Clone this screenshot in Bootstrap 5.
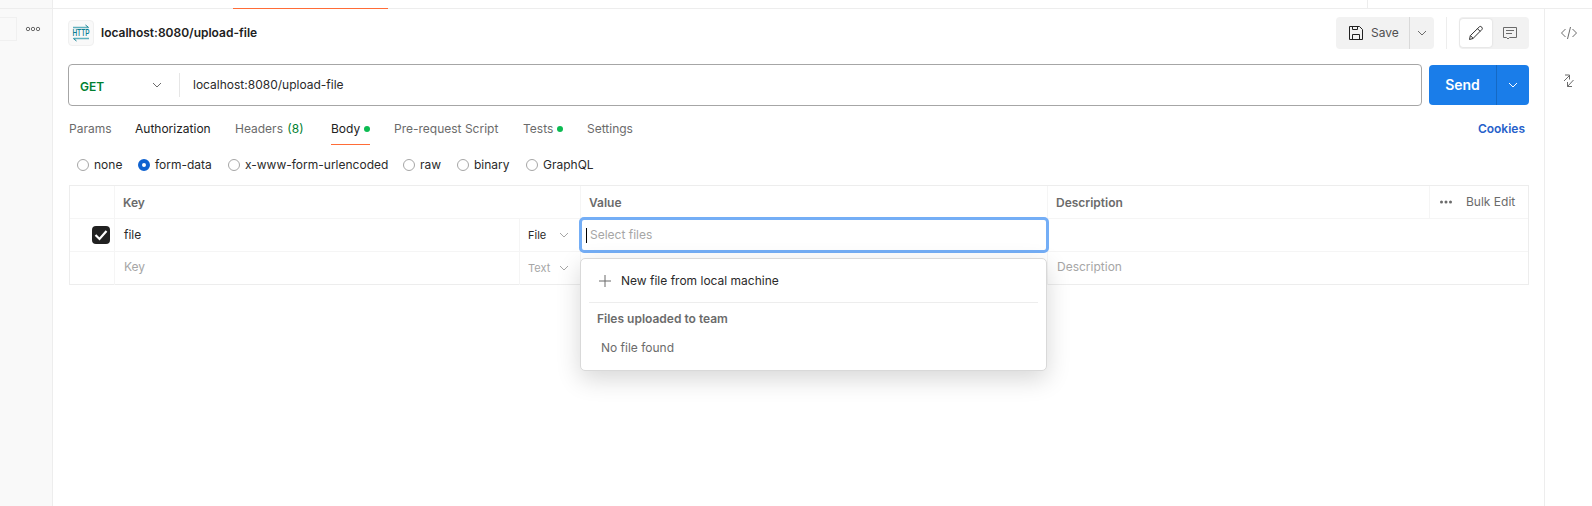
<!DOCTYPE html>
<html lang="en">
<head>
<meta charset="utf-8">
<meta name="viewport" content="width=device-width, initial-scale=1">
<title>localhost:8080/upload-file</title>
<link href="https://cdn.jsdelivr.net/npm/bootstrap@5.3.0/dist/css/bootstrap.min.css" rel="stylesheet">
<style>
body{font-family:Inter,"Liberation Sans",sans-serif;font-size:12px;line-height:18px;color:#2a2a2a;background:#fff;height:506px}
svg{display:block;fill:none;flex:none;overflow:visible}
.topline{height:9px;border-bottom:1px solid #ededed}
.topline .rail{width:53px;background:#f9f9f9;border-right:1px solid #ededed}
.tab-accent{width:155px;height:1px;background:#ff6c37;margin:8px 0 -1px 180px}
.tab-end{width:1px;background:#ededed;margin-left:979px}
.rail-left{width:53px;background:#f9f9f9;border-right:1px solid #ededed;padding-top:8px}
.stub{width:17px;height:24px;border:1px solid #f0f0f0;border-left:0;margin-right:9px}
.rail-right{width:48px;border-left:1px solid #ededed}
.workspace{padding:8px 15px 0}
.http-icon{width:26px;height:26px;background:#f9f9f9;border:1px solid #f0f0f0;border-radius:4px;margin-right:7px}
.grey-box{background:#f2f2f2;height:32px;border-radius:4px}
.save-main{width:74px;padding-left:12px;gap:7px;border-right:1px solid #d9d9d9;color:#505050}
.save-more{width:24px}
.sep{width:1px;height:32px;background:#ededed;margin:0 12px}
.on{width:32px;height:28px;background:#fff;border-radius:3px;margin-left:1px;box-shadow:0 0 2px #ccc}
.urlbox{width:1354px;height:42px;border:1px solid #a6a6a6;border-radius:4px;margin-right:7px}
.method{width:111px;height:24px;border-right:1px solid #e6e6e6;padding:0 17px 0 11px;color:#007f31}
.send{width:100px;height:40px;background:#1a7de9;border-radius:4px;color:#fff;font-size:14px}
.send-main{width:68px;border-right:1px solid #1569c4}
.tabs{height:39px;color:#6b6b6b;padding-left:1px}
.tabs>div{height:39px;padding-top:8px;white-space:nowrap;display:flex;align-items:center;border-bottom:1px solid transparent}
.tabs>div.active{border-color:#ff6c37;color:#212121}
.dot{width:6px;height:6px;border-radius:50%;background:#0cbb52;margin-left:4px;flex:none}
.radios{height:40px;padding:0 0 1px 9px}
.radios>div{display:flex;align-items:center;white-space:nowrap}
.radios i{width:12px;height:12px;border:1px solid #a6a6a6;border-radius:50%;margin-right:5px;flex:none}
.radios i.sel{border:4px solid #0f62d0}
.kv{margin-left:1px;width:1460px;height:100px;display:grid;grid-template-columns:45px 405px 61px 467px 382px 98px;grid-template-rows:repeat(3,33px);border:1px solid #ededed}
.kv>div{border-right:1px solid #f5f5f5;border-bottom:1px solid #f5f5f5;padding-left:9px;display:flex;align-items:center;position:relative}
.kv>div.hd{padding:2px 0 0 8px}
.kv .end{border-right:0}
.kv .last{border-bottom:0;padding-bottom:3px}
.hd{font-weight:600;color:#6b6b6b}
.ph{color:#a6a6a6}
.kv>div.kind{font-size:11px;padding:0 0 1px 8px}
.kind span{width:31px}
.check{width:18px;height:18px;background:#212121;border-radius:4px;margin-left:13px}
.focusbox{position:absolute;left:-2px;top:-2px;width:470px;height:36px;border:3px solid #74aef6;border-radius:5px;background:#fff;z-index:2;padding-left:4px}
.caret{width:1px;height:15px;background:#000;margin-right:3px}
.pop{position:absolute;left:-1px;top:39px;width:467px;height:113px;background:#fff;border:1px solid #d9d9d9;border-radius:5px;box-shadow:0 8px 24px rgba(0,0,0,.16);z-index:2;padding:0 8px}
</style>
</head>
<body class="d-flex flex-column overflow-hidden">
<div class="topline d-flex flex-shrink-0"><div class="rail"></div><div class="tab-accent"></div><div class="tab-end"></div></div>
<div class="d-flex flex-grow-1">
  <aside class="rail-left flex-shrink-0"><div class="d-flex">
    <div class="stub"></div>
    <svg width="14" height="24" viewBox="0 0 14 24" stroke="#6b6b6b"><circle cx="2" cy="12" r="1.700"/><circle cx="7" cy="12" r="1.700"/><circle cx="12" cy="12" r="1.700"/></svg>
  </div></aside>
  <main class="workspace flex-grow-1">
    <header class="d-flex align-items-center">
      <div class="http-icon d-flex align-items-center justify-content-center">
        <svg width="18" height="20" viewBox="0 0 18 20" stroke="#5fb0bd"><path d="M1 4.500h15.500M17 15.500H1.500" stroke-width="1.600"/><path d="M13.500 2l3 2.500M1.500 15.500l3 2.500" stroke="#0b7f91"/><text x="0.500" y="13" font-family="Roboto" font-size="8.500" textLength="17" lengthAdjust="spacingAndGlyphs" fill="#0b7f91" stroke="none" font-weight="500">HTTP</text></svg>
      </div>
      <span class="fw-semibold" style="color:#212121">localhost:8080/upload-file</span>
      <div class="grey-box d-flex ms-auto">
        <div class="save-main d-flex align-items-center">
          <svg width="16" height="16" viewBox="0 0 16 16" stroke="#212121"><path d="M1.500 1.500h10l3 3v10h-13zM4.500 1.500v3h5v-3M4.500 14.500v-5h7v5"/></svg>Save
        </div>
        <div class="save-more d-flex align-items-center justify-content-center"><svg width="10" height="6" viewBox="0 0 10 6" stroke="#6b6b6b"><path d="m1 1 4 4 4-4"/></svg></div>
      </div>
      <div class="sep"></div>
      <div class="grey-box d-flex align-items-center" style="width:70px">
        <div class="on d-flex align-items-center justify-content-center"><svg width="16" height="16" viewBox="0 0 16 16" stroke="#303030"><path d="M1.500 14.500l.8-3.800L11.500 1.700q1.300-.8 2.300.5t.2 2.200L5 13.500zM9.500 3.700l2.700 2.700M2.500 10.700l2.700 2.700"/></svg></div>
        <svg style="margin-left:10px" width="16" height="16" viewBox="0 0 16 16" stroke="#6b6b6b"><path d="M1.500 2.500h13v10h-7L6 14l-1.500-1.500h-3zM4 5.500h8M4 8.500h6"/></svg>
      </div>
    </header>
    <div class="d-flex align-items-center" style="margin-top:15px">
      <div class="urlbox d-flex align-items-center">
        <div class="method d-flex align-items-center justify-content-between"><span class="fw-semibold pt-1" style="line-height:16px">GET</span><svg width="10" height="6" viewBox="0 0 10 6" stroke="#6b6b6b"><path d="m1 1 4 4 4-4"/></svg></div>
        <span style="margin-left:13px">localhost:8080/upload-file</span>
      </div>
      <div class="send d-flex">
        <div class="send-main d-flex align-items-center justify-content-center fw-semibold">Send</div>
        <div class="flex-grow-1 d-flex align-items-center justify-content-center"><svg width="10" height="6" viewBox="0 0 10 6" stroke="#fff"><path d="m1 1 4 4 4-4"/></svg></div>
      </div>
    </div>
    <nav class="tabs d-flex">
      <div style="width:66px">Params</div>
      <div style="width:100px;color:#212121">Authorization</div>
      <div style="width:96px">Headers&nbsp;<span style="color:#007f31;margin-left:1px">(8)</span></div>
      <div class="active" style="width:39px;margin-right:24px">Body<span class="dot"></span></div>
      <div style="width:129px">Pre-request Script</div>
      <div style="width:64px">Tests<span class="dot"></span></div>
      <div>Settings</div>
      <div class="ms-auto fw-semibold" style="color:#265fca;padding-right:4px">Cookies</div>
    </nav>
    <div class="radios d-flex">
      <div style="width:61px"><i></i>none</div>
      <div style="width:90px"><i class="sel"></i>form-data</div>
      <div style="width:175px"><i></i>x-www-form-urlencoded</div>
      <div style="width:54px"><i></i>raw</div>
      <div style="width:69px"><i></i>binary</div>
      <div><i></i>GraphQL</div>
    </div>
    <div class="kv">
      <div></div><div class="hd" style="grid-column:span 2">Key</div><div class="hd">Value</div><div class="hd">Description</div>
      <div class="end" style="color:#6b6b6b"><svg width="14" height="6" viewBox="0 0 14 6"><g fill="#6b6b6b"><circle cx="2.500" cy="3" r="1.500"/><circle cx="7" cy="3" r="1.500"/><circle cx="11.500" cy="3" r="1.500"/></g></svg><span style="margin-left:13px;white-space:nowrap">Bulk Edit</span></div>
      <div><span class="check"><svg width="18" height="18" viewBox="0 0 18 18" stroke="#fff" stroke-width="2.200"><path d="m3.500 9 4 4L14.500 5"/></svg></span></div>
      <div>file</div>
      <div class="kind"><span>File</span><svg width="10" height="6" viewBox="0 0 10 6" stroke="#a6a6a6"><path d="m1 1 4 4 4-4"/></svg></div>
      <div><div class="focusbox ph d-flex align-items-center"><span class="caret"></span>Select files</div>
        <div class="pop">
          <div class="d-flex align-items-center border-bottom" style="height:44px;padding-left:10px;border-color:#ededed!important"><svg width="12" height="12" viewBox="0 0 12 12" stroke="#6b6b6b"><path d="M6 0v12M0 6h12"/></svg><span style="margin-left:10px">New file from local machine</span></div>
          <div class="hd" style="padding:7px 0 0 8px">Files uploaded to team</div>
          <div style="padding:11px 0 0 12px;color:#6b6b6b">No file found</div>
        </div>
      </div>
      <div class="end" style="grid-column:span 2"></div>
      <div class="last"></div><div class="ph last">Key</div>
      <div class="ph kind last"><span>Text</span><svg width="10" height="6" viewBox="0 0 10 6" stroke="#a6a6a6"><path d="m1 1 4 4 4-4"/></svg></div>
      <div class="last"></div><div class="ph last end" style="grid-column:span 2">Description</div>
    </div>
  </main>
  <aside class="rail-right flex-shrink-0 d-flex flex-column align-items-center">
    <svg style="margin-top:16px" width="18" height="16" viewBox="0 0 18 16" stroke="#6b6b6b"><path d="M5.500 4 1.500 8l4 4M12.500 4l4 4-4 4M10.500 2l-3 12"/></svg>
    <svg style="margin-top:32px" width="14" height="16" viewBox="0 0 14 16" stroke="#6b6b6b"><path d="M2 8 7.500 2.500M3 2h4.500v4.500M11.500 7 5.500 13.500M5.500 9v4.500H10"/></svg>
  </aside>
</div>
<script src="https://cdn.jsdelivr.net/npm/bootstrap@5.3.0/dist/js/bootstrap.bundle.min.js"></script>
</body>
</html>
